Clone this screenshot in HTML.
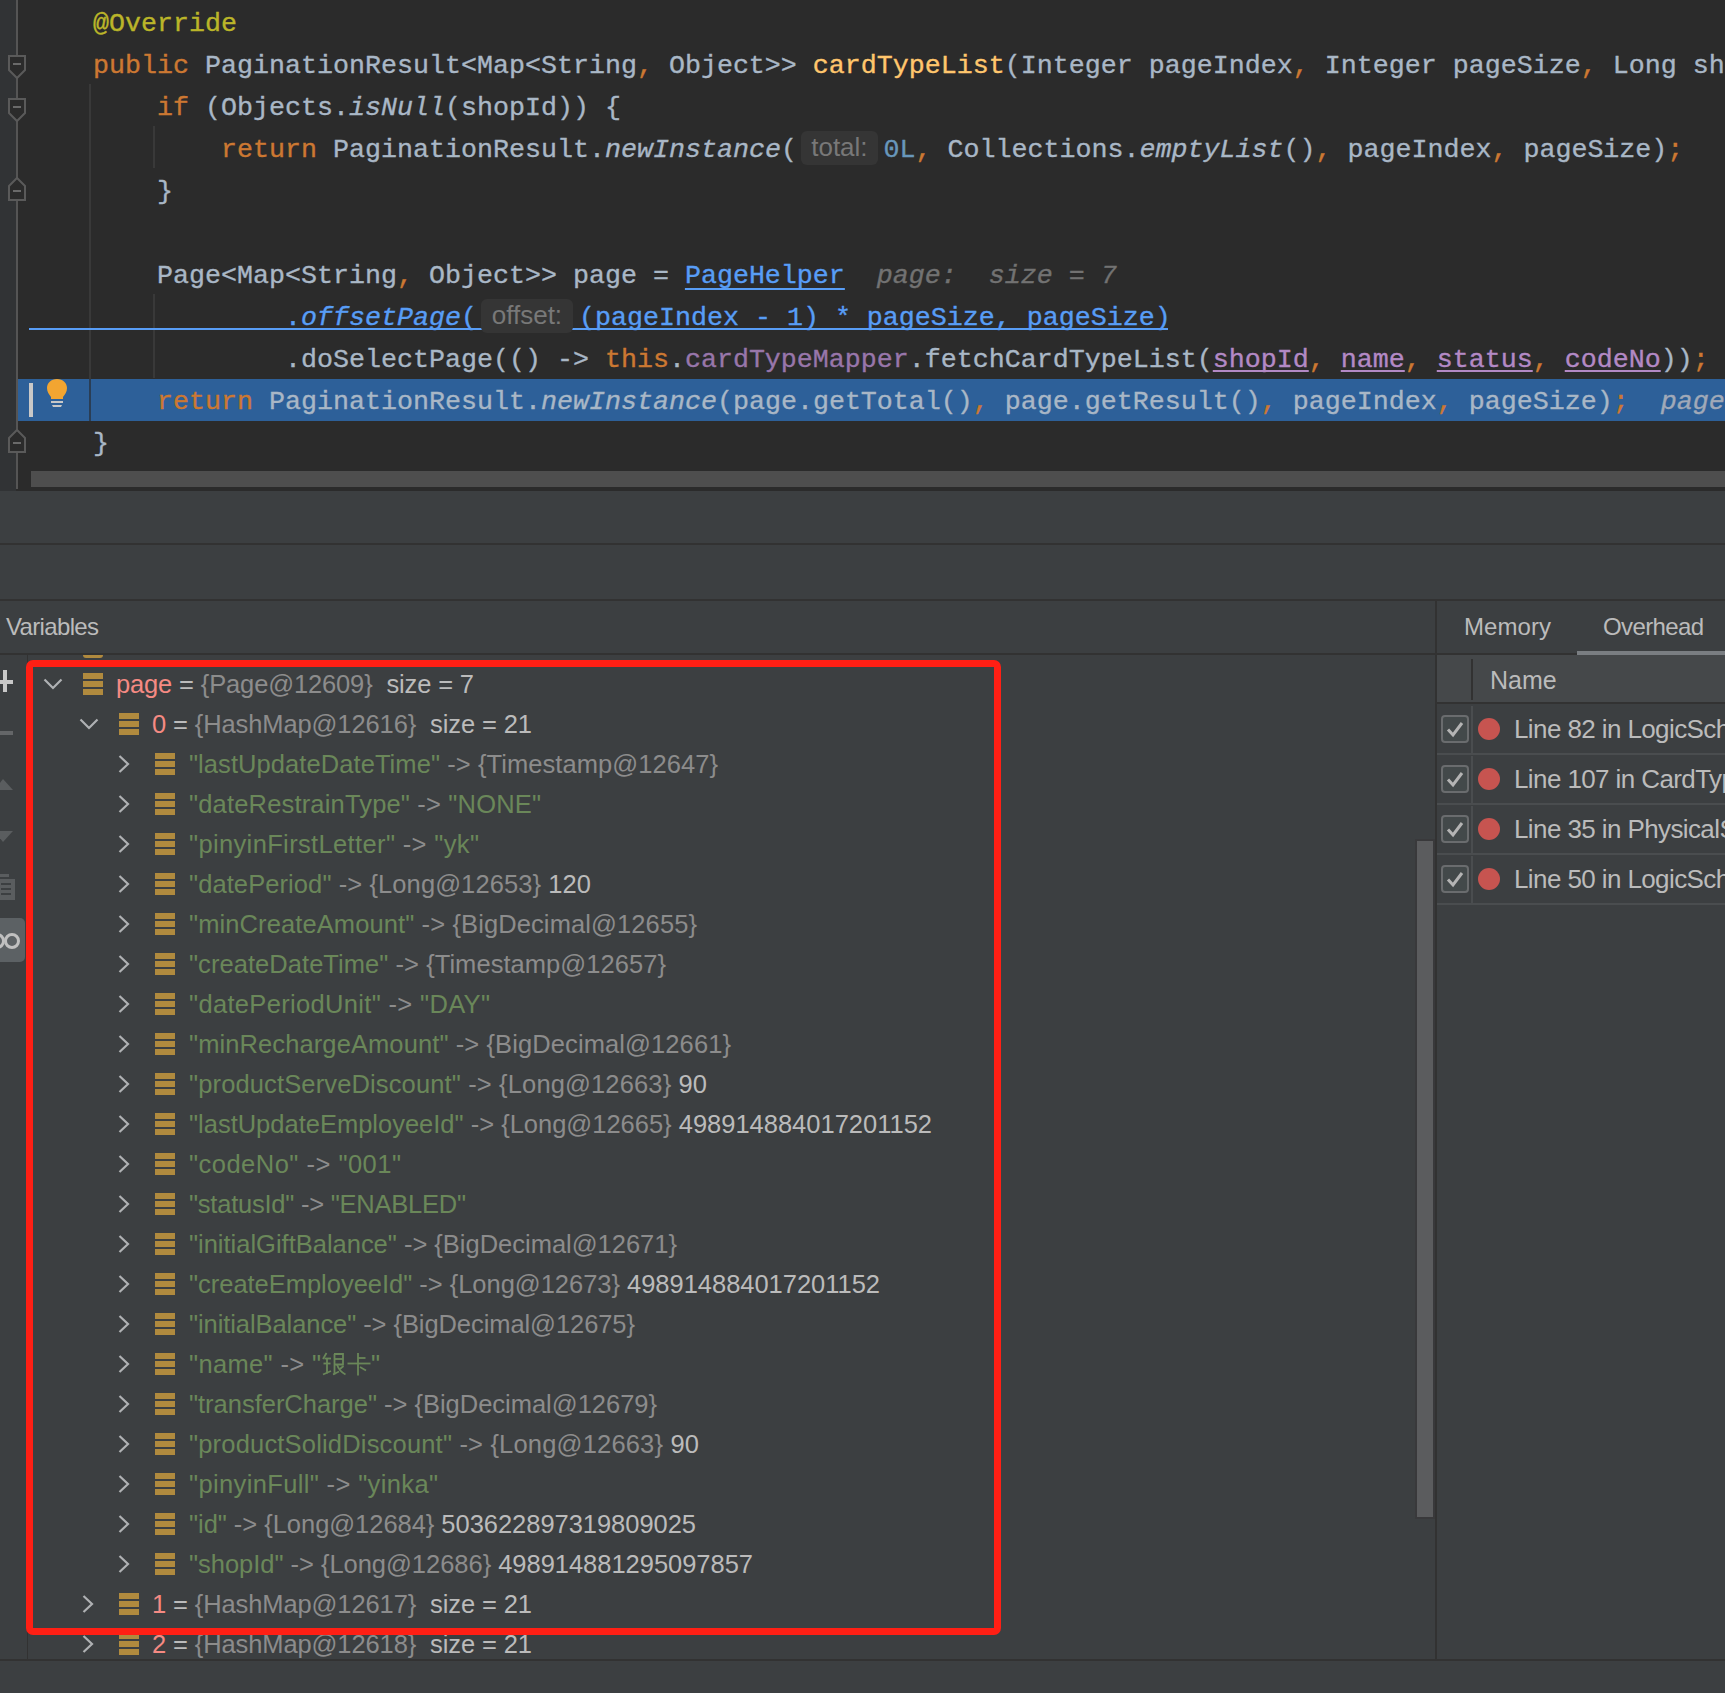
<!DOCTYPE html>
<html><head><meta charset="utf-8">
<style>
html,body{margin:0;padding:0;}
body{width:1725px;height:1693px;overflow:hidden;background:#3C3F41;position:relative;font-family:"Liberation Sans",sans-serif;}
.a{position:absolute;}
#ed{position:absolute;left:0;top:0;width:1725px;height:491px;background:#2B2B2B;overflow:hidden;}
.cl{position:absolute;left:93px;height:42px;line-height:48px;white-space:pre;font-family:"Liberation Mono",monospace;font-size:26.6667px;color:#A9B7C6;-webkit-text-stroke:0.35px currentColor;}
.cl .inl b{-webkit-text-stroke:0}
.d{color:#A9B7C6}
.kw{color:#CC7832}
.ann{color:#BBB529}
.fn{color:#FFC66D}
.num{color:#6897BB}
.it{font-style:italic}
.fld{color:#9876AA}
.lnk{color:#589DF6;text-decoration:underline;text-underline-offset:5px;text-decoration-thickness:2px;text-decoration-skip-ink:none;}
.lnk2{color:#589DF6;}
.lam{color:#B389C5;text-decoration:underline;text-underline-offset:3px;text-decoration-thickness:2px;text-decoration-skip-ink:none;}
.dbg{color:#727272;font-style:italic}
.dbg2{color:#A0A9B8;font-style:italic}
.inl{display:inline-block;height:42px;vertical-align:top;position:relative;}
.inl b{position:absolute;left:4px;top:5px;height:34px;line-height:32px;background:#353535;border-radius:6px;color:#787878;font-weight:normal;font-family:"Liberation Sans",sans-serif;font-size:26px;text-align:center;}
.chv{position:absolute;}
.ico{position:absolute;width:20px;height:22px;background:linear-gradient(#B08A3E 0 6px,transparent 6px 8px,#B08A3E 8px 14px,transparent 14px 16px,#B08A3E 16px 22px);}
.tr{position:absolute;height:40px;line-height:41px;white-space:pre;font-size:25.5px;color:#BBBBBB;}
.tr .nm{color:#F58A83}
.tr .eq{color:#BBBBBB}
.tr .ty{color:#8C8C8C}
.tr .str{color:#6A8759}
.tr .ar{color:#8C8C8C}
.hl{position:absolute;background:#323232;}
.bp{position:absolute;left:1437px;width:288px;height:50px;}
.bp .cb{position:absolute;left:4px;top:11px;width:24px;height:24px;border:2px solid #6A6C6E;border-radius:4px;background:#43494A;}
.bp .dot{position:absolute;left:41px;top:14px;width:22px;height:22px;border-radius:50%;background:#C75450;}
.bp .t{position:absolute;left:77px;top:0;height:50px;line-height:50px;font-size:26px;color:#BBBBBB;white-space:pre;letter-spacing:-0.6px}
.bp:before{content:"";position:absolute;left:0;top:49px;width:288px;height:2px;background:#4A4D4F}
.bp:after{content:"";position:absolute;left:34px;top:2px;width:2px;height:48px;background:#4A4D4F}
</style></head><body>
<div id="ed">
  <div class="a" style="left:0;top:0;width:16px;height:491px;background:#313335"></div>
  <!-- execution line -->
  <div class="a" style="left:18px;top:379px;width:1707px;height:42px;background:#2D6099"></div>
  <!-- indent guides -->
  <div class="a" style="left:89px;top:84px;width:2px;height:295px;background:#393939"></div>
  <div class="a" style="left:89px;top:379px;width:2px;height:42px;background:#2A3E55"></div>
  <div class="a" style="left:153px;top:126px;width:2px;height:42px;background:#393939"></div>
  <div class="a" style="left:153px;top:294px;width:2px;height:84px;background:#393939"></div>
  <!-- fold line -->
  <div class="a" style="left:16px;top:0;width:2px;height:489px;background:#555555"></div>
  <svg class="a" style="left:6px;top:54px" width="22" height="28" viewBox="0 0 22 28"><path d="M3 2 H19 V16 L11 24 L3 16 Z" fill="#2B2B2B" stroke="#5A5A5A" stroke-width="2"/><path d="M7 10 H15" stroke="#6A6A6A" stroke-width="2"/></svg>
  <svg class="a" style="left:6px;top:97px" width="22" height="28" viewBox="0 0 22 28"><path d="M3 2 H19 V16 L11 24 L3 16 Z" fill="#2B2B2B" stroke="#5A5A5A" stroke-width="2"/><path d="M7 10 H15" stroke="#6A6A6A" stroke-width="2"/></svg>
  <svg class="a" style="left:6px;top:174px" width="22" height="28" viewBox="0 0 22 28"><path d="M3 26 H19 V12 L11 4 L3 12 Z" fill="#2B2B2B" stroke="#5A5A5A" stroke-width="2"/><path d="M7 17 H15" stroke="#6A6A6A" stroke-width="2"/></svg>
  <svg class="a" style="left:6px;top:426px" width="22" height="28" viewBox="0 0 22 28"><path d="M3 26 H19 V12 L11 4 L3 12 Z" fill="#2B2B2B" stroke="#5A5A5A" stroke-width="2"/><path d="M7 17 H15" stroke="#6A6A6A" stroke-width="2"/></svg>
  <!-- caret marker + bulb -->
  <div class="a" style="left:29px;top:383px;width:4px;height:34px;background:#C8C8C8"></div>
  <svg class="a" style="left:46px;top:378px" width="22" height="30" viewBox="0 0 22 30"><path d="M11 1 C5 1 1 5 1 10 C1 14 3 16 5 19 L5 21 L17 21 L17 19 C19 16 21 14 21 10 C21 5 17 1 11 1 Z" fill="#F2A531"/><rect x="5" y="23" width="12" height="2" fill="#C8C8C8"/><path d="M6 27 H16 L15 29 H7 Z" fill="#C8C8C8"/></svg>
  <!-- link underline line 7 -->
  <div class="a" style="left:29px;top:328px;width:1139px;height:2px;background:#589DF6"></div>
<div class="cl" style="top:0px"><span class="ann">@Override</span></div>
<div class="cl" style="top:42px"><span class="kw">public </span><span class="d">PaginationResult&lt;Map&lt;String</span><span class="kw">, </span><span class="d">Object&gt;&gt; </span><span class="fn">cardTypeList</span><span class="d">(Integer pageIndex</span><span class="kw">, </span><span class="d">Integer pageSize</span><span class="kw">, </span><span class="d">Long shopId</span></div>
<div class="cl" style="top:84px"><span class="d">    </span><span class="kw">if </span><span class="d">(Objects.</span><span class="it">isNull</span><span class="d">(shopId)) {</span></div>
<div class="cl" style="top:126px"><span class="d">        </span><span class="kw">return </span><span class="d">PaginationResult.</span><span class="it">newInstance</span><span class="d">(</span><span class="inl" style="width:86.6px"><b style="width:77px">total:</b></span><span class="num">0L</span><span class="kw">, </span><span class="d">Collections.</span><span class="it">emptyList</span><span class="d">()</span><span class="kw">, </span><span class="d">pageIndex</span><span class="kw">, </span><span class="d">pageSize)</span><span class="kw">;</span></div>
<div class="cl" style="top:168px"><span class="d">    }</span></div>
<div class="cl" style="top:210px"></div>
<div class="cl" style="top:252px"><span class="d">    Page&lt;Map&lt;String</span><span class="kw">, </span><span class="d">Object&gt;&gt; page = </span><span class="lnk">PageHelper</span><span class="dbg">  page:  size = 7</span></div>
<div class="cl" style="top:294px"><span class="d">            </span><span class="lnk2">.</span><span class="lnk2 it">offsetPage</span><span class="lnk2">(</span><span class="inl" style="width:102px"><b style="width:92px">offset:</b></span><span class="lnk2">(pageIndex - 1) * pageSize, pageSize)</span></div>
<div class="cl" style="top:336px"><span class="d">            .doSelectPage(() -&gt; </span><span class="kw">this</span><span class="d">.</span><span class="fld">cardTypeMapper</span><span class="d">.fetchCardTypeList(</span><span class="lam">shopId</span><span class="kw">, </span><span class="lam">name</span><span class="kw">, </span><span class="lam">status</span><span class="kw">, </span><span class="lam">codeNo</span><span class="d">))</span><span class="kw">;</span></div>
<div class="cl" style="top:378px"><span class="d">    </span><span class="kw">return </span><span class="d">PaginationResult.</span><span class="it">newInstance</span><span class="d">(page.getTotal()</span><span class="kw">, </span><span class="d">page.getResult()</span><span class="kw">, </span><span class="d">pageIndex</span><span class="kw">, </span><span class="d">pageSize)</span><span class="kw">;</span><span class="dbg2">  page: size = 7</span></div>
<div class="cl" style="top:420px"><span class="d">}</span></div>

  <!-- horizontal scrollbar -->
  <div class="a" style="left:31px;top:471px;width:1694px;height:16px;background:#4E4E4E"></div>
</div>

<!-- panel separators -->
<div class="hl" style="left:0;top:543px;width:1725px;height:2px"></div>
<div class="hl" style="left:0;top:599px;width:1725px;height:2px"></div>
<div class="hl" style="left:0;top:653px;width:1577px;height:2px"></div>
<div class="a" style="left:1577px;top:651px;width:148px;height:4px;background:#7A7E82"></div>
<div class="hl" style="left:1435px;top:601px;width:2px;height:1059px"></div>
<div class="hl" style="left:27px;top:655px;width:1px;height:1005px"></div>
<div class="hl" style="left:0;top:1659px;width:1725px;height:2px"></div>

<div class="a" style="letter-spacing:-0.66px;left:6px;top:607px;height:40px;line-height:40px;font-size:24px;color:#BBBBBB">Variables</div>

<!-- left toolbar icons -->
<div class="a" style="left:0;top:680px;width:13px;height:4px;background:#C8C8C8"></div>
<div class="a" style="left:3px;top:670px;width:4px;height:22px;background:#C8C8C8"></div>
<div class="a" style="left:0;top:731px;width:13px;height:4px;background:#646668"></div>
<svg class="a" style="left:0;top:773px" width="16" height="18" viewBox="0 0 16 18"><path d="M-6 17 L3 6 L13 17 Z" fill="#5A5D5F"/></svg>
<svg class="a" style="left:0;top:830px" width="16" height="14" viewBox="0 0 16 14"><path d="M-6 1 L13 1 L3 12 Z" fill="#5A5D5F"/></svg>
<svg class="a" style="left:0;top:874px" width="16" height="28" viewBox="0 0 16 28"><rect x="0" y="0" width="9" height="3" fill="#5A5D5F"/><rect x="0" y="5" width="15" height="21" fill="#5A5D5F"/><rect x="1" y="9" width="10" height="2" fill="#3C3F41"/><rect x="1" y="14" width="10" height="2" fill="#3C3F41"/><rect x="1" y="19" width="10" height="2" fill="#3C3F41"/></svg>
<div class="a" style="left:-6px;top:918px;width:31px;height:44px;border-radius:5px;background:#5C6164"></div>
<svg class="a" style="left:0;top:931px" width="24" height="20" viewBox="0 0 24 20"><circle cx="-3" cy="10" r="6.5" fill="none" stroke="#C0C0C0" stroke-width="3"/><circle cx="12" cy="10" r="6.5" fill="none" stroke="#C0C0C0" stroke-width="3"/></svg>

<!-- partially hidden row above page -->
<div class="a" style="left:83px;top:655px;width:20px;height:3px;border-radius:0 0 10px 10px;background:#B08A3E"></div>

<svg class="chv" style="left:43px;top:678px" width="20" height="12" viewBox="0 0 20 12"><path d="M1.5 1.5 L10 10 L18.5 1.5" fill="none" stroke="#AFB1B3" stroke-width="2.2"/></svg><div class="ico" style="left:83px;top:673px"></div><div class="tr" style="letter-spacing:-0.141px;left:116px;top:664px"><span class="nm">page</span><span class="eq"> = </span><span class="ty">{Page@12609}</span><span class="eq">  size = 7</span></div>
<svg class="chv" style="left:79px;top:718px" width="20" height="12" viewBox="0 0 20 12"><path d="M1.5 1.5 L10 10 L18.5 1.5" fill="none" stroke="#AFB1B3" stroke-width="2.2"/></svg><div class="ico" style="left:119px;top:713px"></div><div class="tr" style="letter-spacing:-0.109px;left:152px;top:704px"><span class="nm">0</span><span class="eq"> = </span><span class="ty">{HashMap@12616}</span><span class="eq">  size = 21</span></div>
<svg class="chv" style="left:118px;top:755px" width="12" height="18" viewBox="0 0 12 18"><path d="M1.5 1 L10 9 L1.5 17" fill="none" stroke="#AFB1B3" stroke-width="2.2"/></svg><div class="ico" style="left:155px;top:753px"></div><div class="tr" style="letter-spacing:0.071px;left:189px;top:744px"><span class="str">&quot;lastUpdateDateTime&quot;</span><span class="ar"> -&gt; </span><span class="ty">{Timestamp@12647}</span></div>
<svg class="chv" style="left:118px;top:795px" width="12" height="18" viewBox="0 0 12 18"><path d="M1.5 1 L10 9 L1.5 17" fill="none" stroke="#AFB1B3" stroke-width="2.2"/></svg><div class="ico" style="left:155px;top:793px"></div><div class="tr" style="letter-spacing:0.173px;left:189px;top:784px"><span class="str">&quot;dateRestrainType&quot;</span><span class="ar"> -&gt; </span><span class="str">&quot;NONE&quot;</span></div>
<svg class="chv" style="left:118px;top:835px" width="12" height="18" viewBox="0 0 12 18"><path d="M1.5 1 L10 9 L1.5 17" fill="none" stroke="#AFB1B3" stroke-width="2.2"/></svg><div class="ico" style="left:155px;top:833px"></div><div class="tr" style="letter-spacing:0.358px;left:189px;top:824px"><span class="str">&quot;pinyinFirstLetter&quot;</span><span class="ar"> -&gt; </span><span class="str">&quot;yk&quot;</span></div>
<svg class="chv" style="left:118px;top:875px" width="12" height="18" viewBox="0 0 12 18"><path d="M1.5 1 L10 9 L1.5 17" fill="none" stroke="#AFB1B3" stroke-width="2.2"/></svg><div class="ico" style="left:155px;top:873px"></div><div class="tr" style="letter-spacing:0.09px;left:189px;top:864px"><span class="str">&quot;datePeriod&quot;</span><span class="ar"> -&gt; </span><span class="ty">{Long@12653}</span><span class="eq"> 120</span></div>
<svg class="chv" style="left:118px;top:915px" width="12" height="18" viewBox="0 0 12 18"><path d="M1.5 1 L10 9 L1.5 17" fill="none" stroke="#AFB1B3" stroke-width="2.2"/></svg><div class="ico" style="left:155px;top:913px"></div><div class="tr" style="letter-spacing:0.106px;left:189px;top:904px"><span class="str">&quot;minCreateAmount&quot;</span><span class="ar"> -&gt; </span><span class="ty">{BigDecimal@12655}</span></div>
<svg class="chv" style="left:118px;top:955px" width="12" height="18" viewBox="0 0 12 18"><path d="M1.5 1 L10 9 L1.5 17" fill="none" stroke="#AFB1B3" stroke-width="2.2"/></svg><div class="ico" style="left:155px;top:953px"></div><div class="tr" style="letter-spacing:0.052px;left:189px;top:944px"><span class="str">&quot;createDateTime&quot;</span><span class="ar"> -&gt; </span><span class="ty">{Timestamp@12657}</span></div>
<svg class="chv" style="left:118px;top:995px" width="12" height="18" viewBox="0 0 12 18"><path d="M1.5 1 L10 9 L1.5 17" fill="none" stroke="#AFB1B3" stroke-width="2.2"/></svg><div class="ico" style="left:155px;top:993px"></div><div class="tr" style="letter-spacing:0.333px;left:189px;top:984px"><span class="str">&quot;datePeriodUnit&quot;</span><span class="ar"> -&gt; </span><span class="str">&quot;DAY&quot;</span></div>
<svg class="chv" style="left:118px;top:1035px" width="12" height="18" viewBox="0 0 12 18"><path d="M1.5 1 L10 9 L1.5 17" fill="none" stroke="#AFB1B3" stroke-width="2.2"/></svg><div class="ico" style="left:155px;top:1033px"></div><div class="tr" style="letter-spacing:0.1px;left:189px;top:1024px"><span class="str">&quot;minRechargeAmount&quot;</span><span class="ar"> -&gt; </span><span class="ty">{BigDecimal@12661}</span></div>
<svg class="chv" style="left:118px;top:1075px" width="12" height="18" viewBox="0 0 12 18"><path d="M1.5 1 L10 9 L1.5 17" fill="none" stroke="#AFB1B3" stroke-width="2.2"/></svg><div class="ico" style="left:155px;top:1073px"></div><div class="tr" style="letter-spacing:0.136px;left:189px;top:1064px"><span class="str">&quot;productServeDiscount&quot;</span><span class="ar"> -&gt; </span><span class="ty">{Long@12663}</span><span class="eq"> 90</span></div>
<svg class="chv" style="left:118px;top:1115px" width="12" height="18" viewBox="0 0 12 18"><path d="M1.5 1 L10 9 L1.5 17" fill="none" stroke="#AFB1B3" stroke-width="2.2"/></svg><div class="ico" style="left:155px;top:1113px"></div><div class="tr" style="letter-spacing:-0.005px;left:189px;top:1104px"><span class="str">&quot;lastUpdateEmployeeId&quot;</span><span class="ar"> -&gt; </span><span class="ty">{Long@12665}</span><span class="eq"> 498914884017201152</span></div>
<svg class="chv" style="left:118px;top:1155px" width="12" height="18" viewBox="0 0 12 18"><path d="M1.5 1 L10 9 L1.5 17" fill="none" stroke="#AFB1B3" stroke-width="2.2"/></svg><div class="ico" style="left:155px;top:1153px"></div><div class="tr" style="letter-spacing:0.486px;left:189px;top:1144px"><span class="str">&quot;codeNo&quot;</span><span class="ar"> -&gt; </span><span class="str">&quot;001&quot;</span></div>
<svg class="chv" style="left:118px;top:1195px" width="12" height="18" viewBox="0 0 12 18"><path d="M1.5 1 L10 9 L1.5 17" fill="none" stroke="#AFB1B3" stroke-width="2.2"/></svg><div class="ico" style="left:155px;top:1193px"></div><div class="tr" style="letter-spacing:-0.233px;left:189px;top:1184px"><span class="str">&quot;statusId&quot;</span><span class="ar"> -&gt; </span><span class="str">&quot;ENABLED&quot;</span></div>
<svg class="chv" style="left:118px;top:1235px" width="12" height="18" viewBox="0 0 12 18"><path d="M1.5 1 L10 9 L1.5 17" fill="none" stroke="#AFB1B3" stroke-width="2.2"/></svg><div class="ico" style="left:155px;top:1233px"></div><div class="tr" style="letter-spacing:-0.01px;left:189px;top:1224px"><span class="str">&quot;initialGiftBalance&quot;</span><span class="ar"> -&gt; </span><span class="ty">{BigDecimal@12671}</span></div>
<svg class="chv" style="left:118px;top:1275px" width="12" height="18" viewBox="0 0 12 18"><path d="M1.5 1 L10 9 L1.5 17" fill="none" stroke="#AFB1B3" stroke-width="2.2"/></svg><div class="ico" style="left:155px;top:1273px"></div><div class="tr" style="letter-spacing:-0.024px;left:189px;top:1264px"><span class="str">&quot;createEmployeeId&quot;</span><span class="ar"> -&gt; </span><span class="ty">{Long@12673}</span><span class="eq"> 498914884017201152</span></div>
<svg class="chv" style="left:118px;top:1315px" width="12" height="18" viewBox="0 0 12 18"><path d="M1.5 1 L10 9 L1.5 17" fill="none" stroke="#AFB1B3" stroke-width="2.2"/></svg><div class="ico" style="left:155px;top:1313px"></div><div class="tr" style="letter-spacing:-0.074px;left:189px;top:1304px"><span class="str">&quot;initialBalance&quot;</span><span class="ar"> -&gt; </span><span class="ty">{BigDecimal@12675}</span></div>
<svg class="chv" style="left:118px;top:1355px" width="12" height="18" viewBox="0 0 12 18"><path d="M1.5 1 L10 9 L1.5 17" fill="none" stroke="#AFB1B3" stroke-width="2.2"/></svg><div class="ico" style="left:155px;top:1353px"></div><div class="tr" style="letter-spacing:0.347px;left:189px;top:1344px"><span class="str">&quot;name&quot;</span><span class="ar"> -&gt; </span><span class="str">&quot;</span></div><svg class="a" style="left:322px;top:1352px" width="50" height="25" viewBox="0 0 50 25"><g fill="none" stroke="#6A8759" stroke-width="1.8" stroke-linecap="butt"><path d="M4.5 1 L1 7"/><path d="M2.5 6.5 H9"/><path d="M1.5 11.5 H8.5"/><path d="M5 6.5 V21.5"/><path d="M1 22.5 L9 19"/><path d="M12 2 H21 V12.5 H12"/><path d="M12 7 H21"/><path d="M12.5 2 V22.5"/><path d="M11 22.5 L17 19.5"/><path d="M15 12.5 Q17 19 23.5 22.5"/><path d="M21.5 14 L18 17"/><path d="M36 1 V23.5"/><path d="M36 6 H43.5"/><path d="M25.5 11.5 H48.5"/><path d="M38 15 L44 18.5"/></g></svg><div class="tr" style="left:371px;top:1344px"><span class="str">"</span></div>
<svg class="chv" style="left:118px;top:1395px" width="12" height="18" viewBox="0 0 12 18"><path d="M1.5 1 L10 9 L1.5 17" fill="none" stroke="#AFB1B3" stroke-width="2.2"/></svg><div class="ico" style="left:155px;top:1393px"></div><div class="tr" style="letter-spacing:-0.015px;left:189px;top:1384px"><span class="str">&quot;transferCharge&quot;</span><span class="ar"> -&gt; </span><span class="ty">{BigDecimal@12679}</span></div>
<svg class="chv" style="left:118px;top:1435px" width="12" height="18" viewBox="0 0 12 18"><path d="M1.5 1 L10 9 L1.5 17" fill="none" stroke="#AFB1B3" stroke-width="2.2"/></svg><div class="ico" style="left:155px;top:1433px"></div><div class="tr" style="letter-spacing:0.184px;left:189px;top:1424px"><span class="str">&quot;productSolidDiscount&quot;</span><span class="ar"> -&gt; </span><span class="ty">{Long@12663}</span><span class="eq"> 90</span></div>
<svg class="chv" style="left:118px;top:1475px" width="12" height="18" viewBox="0 0 12 18"><path d="M1.5 1 L10 9 L1.5 17" fill="none" stroke="#AFB1B3" stroke-width="2.2"/></svg><div class="ico" style="left:155px;top:1473px"></div><div class="tr" style="letter-spacing:0.362px;left:189px;top:1464px"><span class="str">&quot;pinyinFull&quot;</span><span class="ar"> -&gt; </span><span class="str">&quot;yinka&quot;</span></div>
<svg class="chv" style="left:118px;top:1515px" width="12" height="18" viewBox="0 0 12 18"><path d="M1.5 1 L10 9 L1.5 17" fill="none" stroke="#AFB1B3" stroke-width="2.2"/></svg><div class="ico" style="left:155px;top:1513px"></div><div class="tr" style="letter-spacing:-0.038px;left:189px;top:1504px"><span class="str">&quot;id&quot;</span><span class="ar"> -&gt; </span><span class="ty">{Long@12684}</span><span class="eq"> 503622897319809025</span></div>
<svg class="chv" style="left:118px;top:1555px" width="12" height="18" viewBox="0 0 12 18"><path d="M1.5 1 L10 9 L1.5 17" fill="none" stroke="#AFB1B3" stroke-width="2.2"/></svg><div class="ico" style="left:155px;top:1553px"></div><div class="tr" style="letter-spacing:-0.028px;left:189px;top:1544px"><span class="str">&quot;shopId&quot;</span><span class="ar"> -&gt; </span><span class="ty">{Long@12686}</span><span class="eq"> 498914881295097857</span></div>
<svg class="chv" style="left:82px;top:1595px" width="12" height="18" viewBox="0 0 12 18"><path d="M1.5 1 L10 9 L1.5 17" fill="none" stroke="#AFB1B3" stroke-width="2.2"/></svg><div class="ico" style="left:119px;top:1593px"></div><div class="tr" style="letter-spacing:-0.109px;left:152px;top:1584px"><span class="nm">1</span><span class="eq"> = </span><span class="ty">{HashMap@12617}</span><span class="eq">  size = 21</span></div>
<svg class="chv" style="left:82px;top:1635px" width="12" height="18" viewBox="0 0 12 18"><path d="M1.5 1 L10 9 L1.5 17" fill="none" stroke="#AFB1B3" stroke-width="2.2"/></svg><div class="ico" style="left:119px;top:1633px"></div><div class="tr" style="letter-spacing:-0.109px;left:152px;top:1624px"><span class="nm">2</span><span class="eq"> = </span><span class="ty">{HashMap@12618}</span><span class="eq">  size = 21</span></div>


<!-- tree scrollbar -->
<div class="a" style="left:1415px;top:839px;width:16px;height:676px;background:#5B5C5E;border:2px solid #39393B"></div>

<!-- red annotation box -->
<div class="a" style="left:26px;top:660px;width:961px;height:961px;border:7px solid #FF1F14;border-radius:7px"></div>

<!-- right panel -->
<div class="a" style="letter-spacing:0.066px;left:1464px;top:607px;height:40px;line-height:40px;font-size:24px;color:#BBBBBB">Memory</div>
<div class="a" style="letter-spacing:-0.629px;left:1603px;top:607px;height:40px;line-height:40px;font-size:24px;color:#BBBBBB">Overhead</div>
<div class="a" style="left:1437px;top:655px;width:288px;height:48px;background:#45484A"></div>
<div class="a" style="left:1471px;top:659px;width:2px;height:41px;background:#323232"></div>
<div class="a" style="left:1490px;top:660px;height:40px;line-height:40px;font-size:25px;color:#BBBBBB">Name</div>
<div class="hl" style="left:1437px;top:702px;width:288px;height:2px"></div>
<div class="bp" style="top:704px"><div class="cb"><svg width="24" height="24" viewBox="0 0 24 24" style="position:absolute;left:0;top:0"><path d="M5 12.5 L10 18 L19 6" fill="none" stroke="#B4B4B4" stroke-width="3"/></svg></div><div class="dot"></div><div class="t">Line 82 in LogicSchedule</div></div>
<div class="bp" style="top:754px"><div class="cb"><svg width="24" height="24" viewBox="0 0 24 24" style="position:absolute;left:0;top:0"><path d="M5 12.5 L10 18 L19 6" fill="none" stroke="#B4B4B4" stroke-width="3"/></svg></div><div class="dot"></div><div class="t">Line 107 in CardTypeService</div></div>
<div class="bp" style="top:804px"><div class="cb"><svg width="24" height="24" viewBox="0 0 24 24" style="position:absolute;left:0;top:0"><path d="M5 12.5 L10 18 L19 6" fill="none" stroke="#B4B4B4" stroke-width="3"/></svg></div><div class="dot"></div><div class="t">Line 35 in PhysicalService</div></div>
<div class="bp" style="top:854px"><div class="cb"><svg width="24" height="24" viewBox="0 0 24 24" style="position:absolute;left:0;top:0"><path d="M5 12.5 L10 18 L19 6" fill="none" stroke="#B4B4B4" stroke-width="3"/></svg></div><div class="dot"></div><div class="t">Line 50 in LogicSchedule</div></div>
</body></html>
